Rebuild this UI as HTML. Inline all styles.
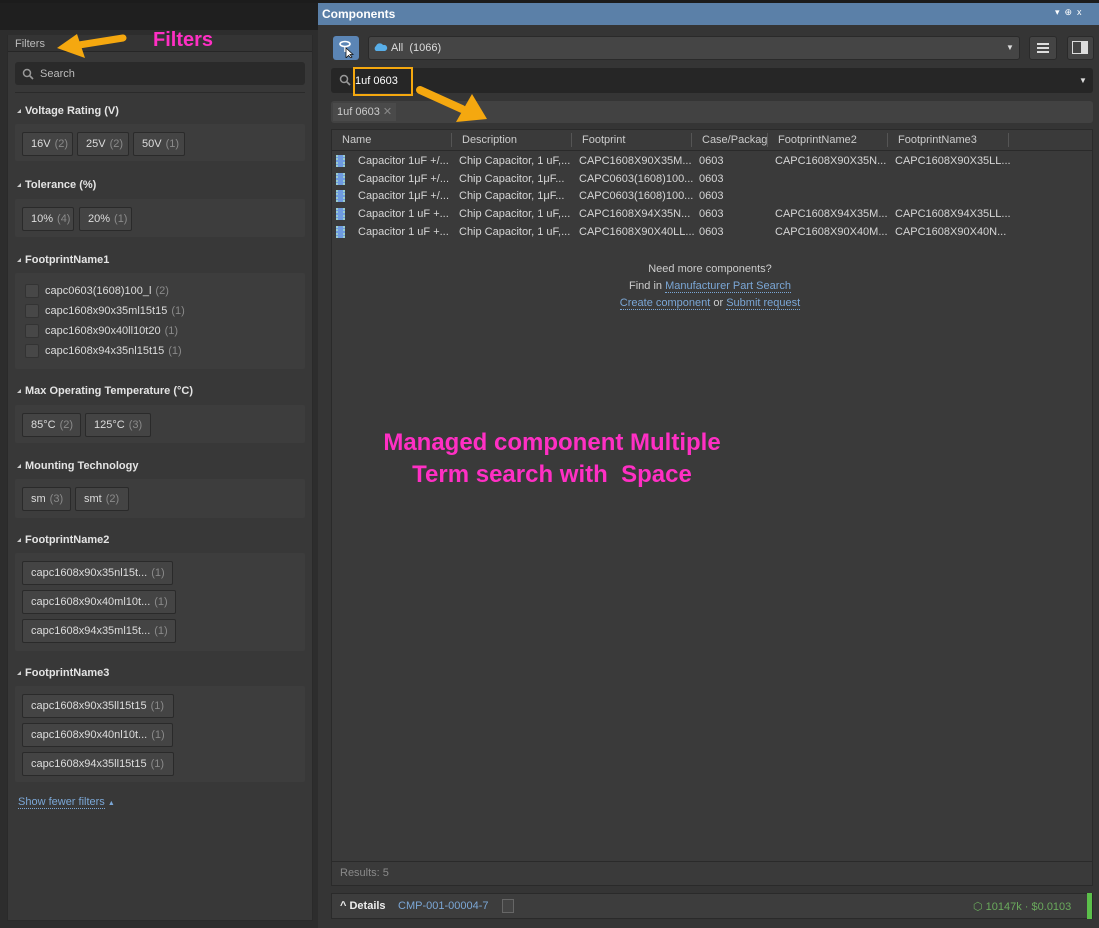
<!DOCTYPE html>
<html><head><meta charset="utf-8"><style>
*{margin:0;padding:0;box-sizing:border-box}
body{width:1099px;height:928px;background:#2a2a2a;font-family:"Liberation Sans",sans-serif;font-size:11px;color:#d0d0d0;position:relative;overflow:hidden}
.a{position:absolute}
.t{white-space:nowrap}
.box{position:absolute;left:15px;width:290px;background:#3d3d3d;border-radius:2px}
.h{position:absolute;left:17px;font-weight:bold;color:#e4e4e4;font-size:11px;white-space:nowrap}
.h:before{content:"";display:inline-block;width:0;height:0;border-left:4px solid transparent;border-bottom:4px solid #ccc;margin-right:4px;vertical-align:1px}
.chip{position:absolute;height:24px;background:#444;border:1px solid #2a2a2a;border-radius:2px;line-height:22px;padding-left:8px;color:#ddd;white-space:nowrap;font-size:11px}
.chip span{color:#8a8a8a;margin-left:4px}
.cb{position:absolute;left:25px;width:14px;height:14px;background:#474747;border:1px solid #333;border-radius:2px}
.cl{position:absolute;left:45px;white-space:nowrap;color:#ddd}
.cl span{color:#8a8a8a;margin-left:4px}
.row{position:absolute;left:333px;height:18px;width:760px;white-space:nowrap;line-height:18px;color:#d6d6d6}
.row i{position:absolute;left:3px;top:3px;width:9px;height:12px;background:#6f9be0;border-left:2px dotted #9cc;border-right:2px dotted #9cc}
.row b{position:absolute;font-weight:normal}
.hd{position:absolute;top:130px;height:21px;line-height:21px;color:#ccc;white-space:nowrap}
.sep{position:absolute;top:133px;width:1px;height:14px;background:#555}
.lnk{color:#7ba7d6;border-bottom:1px dotted #7ba7d6}
</style></head><body>
<div class="a" style="left:0;top:0;width:1099px;height:3px;background:#1c1c1c"></div>
<div class="a" style="left:0;top:3px;width:318px;height:27px;background:#1f1f1f"></div>
<!-- left panel -->
<div class="a" style="left:0;top:30px;width:318px;height:898px;background:#2d2d2d"></div>
<div class="a" style="left:7px;top:35px;width:306px;height:886px;background:#383838;border:1px solid #2a2a2a"></div>
<div class="a" style="left:8px;top:35px;width:304px;height:17px;background:#343434;border-bottom:1px solid #262626"></div>
<div class="a t" style="left:15px;top:38px;color:#bbb;font-size:11px">Filters</div>
<div class="a t" style="left:153px;top:29px;color:#ff2fc4;font-weight:bold;font-size:20px">Filters</div>
<svg class="a" style="left:55px;top:30px" width="72" height="30"><path d="M68 8 L24 15" stroke="#f5a80f" stroke-width="7" stroke-linecap="round"/><path d="M2 18 L22 4 L30 28 Z" fill="#f5a80f"/></svg>
<div class="a" style="left:15px;top:62px;width:290px;height:23px;background:#2a2a2a;border-radius:3px"></div>
<svg class="a" style="left:22px;top:68px" width="12" height="12"><circle cx="5" cy="5" r="3.5" stroke="#999" stroke-width="1.5" fill="none"/><path d="M7.5 7.5 L11 11" stroke="#999" stroke-width="1.6"/></svg>
<div class="a t" style="left:40px;top:68px;color:#bbb">Search</div>
<div class="a" style="left:15px;top:92px;width:290px;height:1px;background:#2a2a2a"></div>

<div class="h" style="top:105px">Voltage Rating (V)</div>
<div class="box" style="top:124px;height:37px"></div>
<div class="chip" style="left:22px;top:132px;width:51px">16V<span>(2)</span></div>
<div class="chip" style="left:77px;top:132px;width:52px">25V<span>(2)</span></div>
<div class="chip" style="left:133px;top:132px;width:52px">50V<span>(1)</span></div>

<div class="h" style="top:179px">Tolerance (%)</div>
<div class="box" style="top:199px;height:38px"></div>
<div class="chip" style="left:22px;top:207px;width:52px">10%<span>(4)</span></div>
<div class="chip" style="left:79px;top:207px;width:53px">20%<span>(1)</span></div>

<div class="h" style="top:254px">FootprintName1</div>
<div class="box" style="top:273px;height:96px"></div>
<div class="cb" style="top:284px"></div><div class="cl" style="top:285px">capc0603(1608)100_l<span>(2)</span></div>
<div class="cb" style="top:304px"></div><div class="cl" style="top:305px">capc1608x90x35ml15t15<span>(1)</span></div>
<div class="cb" style="top:324px"></div><div class="cl" style="top:325px">capc1608x90x40ll10t20<span>(1)</span></div>
<div class="cb" style="top:344px"></div><div class="cl" style="top:345px">capc1608x94x35nl15t15<span>(1)</span></div>

<div class="h" style="top:385px">Max Operating Temperature (°C)</div>
<div class="box" style="top:405px;height:38px"></div>
<div class="chip" style="left:22px;top:413px;width:59px">85°C<span>(2)</span></div>
<div class="chip" style="left:85px;top:413px;width:66px">125°C<span>(3)</span></div>

<div class="h" style="top:460px">Mounting Technology</div>
<div class="box" style="top:479px;height:39px"></div>
<div class="chip" style="left:22px;top:487px;width:49px">sm<span>(3)</span></div>
<div class="chip" style="left:75px;top:487px;width:54px">smt<span>(2)</span></div>

<div class="h" style="top:534px">FootprintName2</div>
<div class="box" style="top:553px;height:98px"></div>
<div class="chip" style="left:22px;top:561px;width:151px">capc1608x90x35nl15t...<span>(1)</span></div>
<div class="chip" style="left:22px;top:590px;width:154px">capc1608x90x40ml10t...<span>(1)</span></div>
<div class="chip" style="left:22px;top:619px;width:154px">capc1608x94x35ml15t...<span>(1)</span></div>

<div class="h" style="top:667px">FootprintName3</div>
<div class="box" style="top:686px;height:96px"></div>
<div class="chip" style="left:22px;top:694px;width:152px">capc1608x90x35ll15t15<span>(1)</span></div>
<div class="chip" style="left:22px;top:723px;width:151px">capc1608x90x40nl10t...<span>(1)</span></div>
<div class="chip" style="left:22px;top:752px;width:152px">capc1608x94x35ll15t15<span>(1)</span></div>

<div class="a t" style="left:18px;top:796px;font-size:11px"><span class="lnk">Show fewer filters</span> <span style="color:#7ba7d6;font-size:7px">▲</span></div>

<!-- right panel -->
<div class="a" style="left:318px;top:3px;width:781px;height:22px;background:#5b80a8"></div>
<div class="a t" style="left:322px;top:7px;color:#fff;font-weight:bold;font-size:12px">Components</div>
<div class="a t" style="left:1055px;top:7px;color:#fff;font-size:9px">▾ &nbsp;⊕ &nbsp;x</div>
<div class="a" style="left:318px;top:25px;width:781px;height:903px;background:#353535"></div>
<div class="a" style="left:333px;top:36px;width:26px;height:24px;background:#5b85b5;border-radius:3px"></div>
<svg class="a" style="left:338px;top:40px" width="16" height="18"><ellipse cx="7" cy="4" rx="5" ry="2.5" stroke="#fff" stroke-width="1.6" fill="none"/><path d="M7 7 V12" stroke="#fff" stroke-width="1.5"/><path d="M8 8 L8 18 L10.5 15.5 L13 18 L14 17 L12 14.5 L15 14.5 Z" fill="#fff" stroke="#111" stroke-width=".8"/></svg>
<div class="a" style="left:368px;top:36px;width:652px;height:24px;background:#454545;border:1px solid #2a2a2a;border-radius:3px"></div>
<svg class="a" style="left:373px;top:42px" width="15" height="10"><path d="M3 9 A3 3 0 0 1 3 4 A4 4 0 0 1 10 3 A3 3 0 0 1 12 9 Z" fill="#58aee8"/></svg>
<div class="a t" style="left:391px;top:42px;color:#ddd">All &nbsp;(1066)</div>
<div class="a t" style="left:1006px;top:43px;color:#ddd;font-size:8px">▼</div>
<div class="a" style="left:1029px;top:36px;width:28px;height:24px;background:#444;border:1px solid #2a2a2a;border-radius:3px"></div>
<div class="a" style="left:1037px;top:43px;width:12px;height:2px;background:#ddd;box-shadow:0 4px #ddd,0 8px #ddd"></div>
<div class="a" style="left:1067px;top:36px;width:27px;height:24px;background:#444;border:1px solid #2a2a2a;border-radius:3px"></div>
<div class="a" style="left:1072px;top:41px;width:16px;height:13px;border:1px solid #ddd"></div>
<div class="a" style="left:1081px;top:41px;width:7px;height:13px;background:#ddd"></div>

<div class="a" style="left:331px;top:68px;width:762px;height:25px;background:#262626;border-radius:3px"></div>
<svg class="a" style="left:339px;top:74px" width="12" height="12"><circle cx="5" cy="5" r="3.5" stroke="#999" stroke-width="1.5" fill="none"/><path d="M7.5 7.5 L11 11" stroke="#999" stroke-width="1.6"/></svg>
<div class="a t" style="left:355px;top:75px;color:#fff">1uf 0603</div>
<div class="a" style="left:353px;top:67px;width:60px;height:29px;border:2px solid #f5a80f"></div>
<div class="a t" style="left:1079px;top:76px;color:#ddd;font-size:8px">▼</div>

<div class="a" style="left:331px;top:101px;width:762px;height:22px;background:#424242;border-radius:3px"></div>
<div class="a t" style="left:333px;top:103px;height:18px;line-height:19px;padding:0 4px;background:#4a4a4a;color:#ccc">1uf 0603 <span style="color:#888">✕</span></div>
<svg class="a" style="left:412px;top:84px" width="80" height="42"><path d="M8 6 L50 25" stroke="#f5a80f" stroke-width="8" stroke-linecap="round"/><path d="M44 38 L75 35 L60 10 Z" fill="#f5a80f"/></svg>

<div class="a" style="left:331px;top:129px;width:762px;height:757px;background:#3a3a3a;border:1px solid #2a2a2a"></div>
<div class="a" style="left:332px;top:150px;width:760px;height:1px;background:#2a2a2a"></div>
<div class="hd" style="left:342px">Name</div><div class="sep" style="left:451px"></div>
<div class="hd" style="left:462px">Description</div><div class="sep" style="left:571px"></div>
<div class="hd" style="left:582px">Footprint</div><div class="sep" style="left:691px"></div>
<div class="hd" style="left:702px">Case/Packag</div><div class="sep" style="left:767px"></div>
<div class="hd" style="left:778px">FootprintName2</div><div class="sep" style="left:887px"></div>
<div class="hd" style="left:898px">FootprintName3</div><div class="sep" style="left:1008px"></div>

<div class="row" style="top:152px"><i></i><b style="left:25px">Capacitor 1uF +/...</b><b style="left:126px">Chip Capacitor, 1 uF,...</b><b style="left:246px">CAPC1608X90X35M...</b><b style="left:366px">0603</b><b style="left:442px">CAPC1608X90X35N...</b><b style="left:562px">CAPC1608X90X35LL...</b></div>
<div class="row" style="top:170px"><i></i><b style="left:25px">Capacitor 1μF +/...</b><b style="left:126px">Chip Capacitor, 1μF...</b><b style="left:246px">CAPC0603(1608)100...</b><b style="left:366px">0603</b></div>
<div class="row" style="top:187px"><i></i><b style="left:25px">Capacitor 1μF +/...</b><b style="left:126px">Chip Capacitor, 1μF...</b><b style="left:246px">CAPC0603(1608)100...</b><b style="left:366px">0603</b></div>
<div class="row" style="top:205px"><i></i><b style="left:25px">Capacitor 1 uF +...</b><b style="left:126px">Chip Capacitor, 1 uF,...</b><b style="left:246px">CAPC1608X94X35N...</b><b style="left:366px">0603</b><b style="left:442px">CAPC1608X94X35M...</b><b style="left:562px">CAPC1608X94X35LL...</b></div>
<div class="row" style="top:223px"><i></i><b style="left:25px">Capacitor 1 uF +...</b><b style="left:126px">Chip Capacitor, 1 uF,...</b><b style="left:246px">CAPC1608X90X40LL...</b><b style="left:366px">0603</b><b style="left:442px">CAPC1608X90X40M...</b><b style="left:562px">CAPC1608X90X40N...</b></div>

<div class="a" style="left:560px;top:261px;width:300px;text-align:center;line-height:17px;color:#ccc">Need more components?<br>Find in <span class="lnk">Manufacturer Part Search</span><br><span class="lnk">Create component</span> or <span class="lnk">Submit request</span></div>

<div class="a" style="left:352px;top:427px;width:400px;text-align:center;color:#ff2fc4;font-weight:bold;font-size:24px;line-height:32px">Managed component Multiple<br>Term search with &nbsp;Space</div>

<div class="a" style="left:332px;top:861px;width:760px;height:1px;background:#2a2a2a"></div>
<div class="a t" style="left:340px;top:867px;color:#8a8a8a">Results: 5</div>

<div class="a" style="left:331px;top:893px;width:762px;height:26px;background:#3d3d3d;border:1px solid #2a2a2a"></div>
<div class="a t" style="left:340px;top:900px;color:#eee;font-weight:bold">^ Details</div>
<div class="a t" style="left:398px;top:900px;color:#7ba7d6">CMP-001-00004-7</div>
<div class="a" style="left:502px;top:899px;width:12px;height:14px;border:1px solid #666;background:#444"></div>
<div class="a t" style="left:973px;top:900px;color:#6aaa5c">⬡ 10147k · $0.0103</div>
<div class="a" style="left:1087px;top:893px;width:5px;height:26px;background:#5bbf4a"></div>
</body></html>
